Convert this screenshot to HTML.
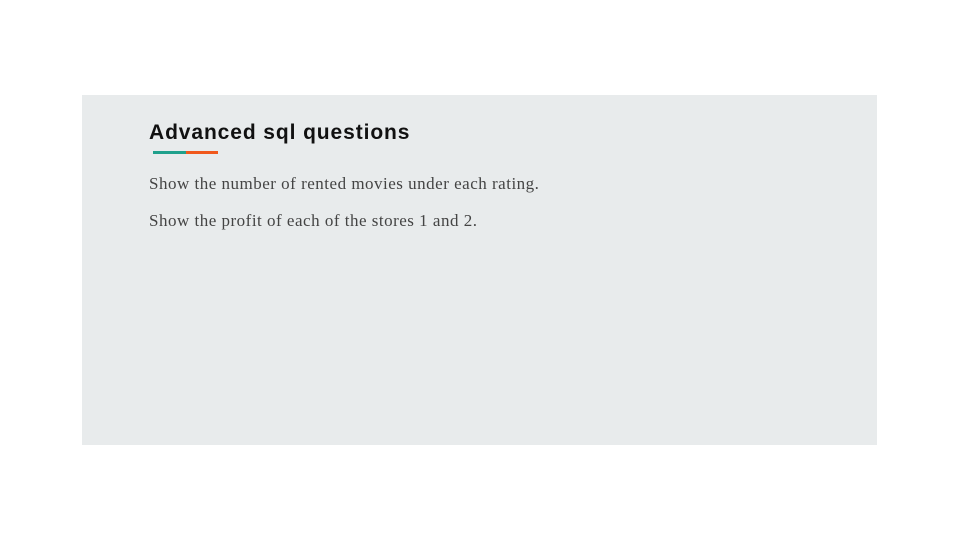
<!DOCTYPE html>
<html><head><style>
body{margin:0;width:960px;height:540px;background:#fff;position:relative;overflow:hidden}
.p{position:absolute;left:82px;top:95px;width:795px;height:350px;background:#e8ebec}
h1{position:absolute;left:149px;top:121px;margin:0;font:bold 21px "Liberation Sans",sans-serif;color:#111;letter-spacing:0.9px}
.u1{position:absolute;left:153px;top:151px;width:33px;height:3px;background:#1fa08c}
.u2{position:absolute;left:186px;top:151px;width:32px;height:3px;background:#f0581c}
.t{position:absolute;left:149px;margin:0;font:17px "Liberation Serif",serif;color:#444;letter-spacing:0.5px}
</style></head><body>
<div class="p"></div>
<h1>Advanced sql questions</h1>
<div class="u1"></div><div class="u2"></div>
<p class="t" style="top:174px">Show the number of rented movies under each rating.</p>
<p class="t" style="top:211px">Show the profit of each of the stores 1 and 2.</p>
</body></html>
